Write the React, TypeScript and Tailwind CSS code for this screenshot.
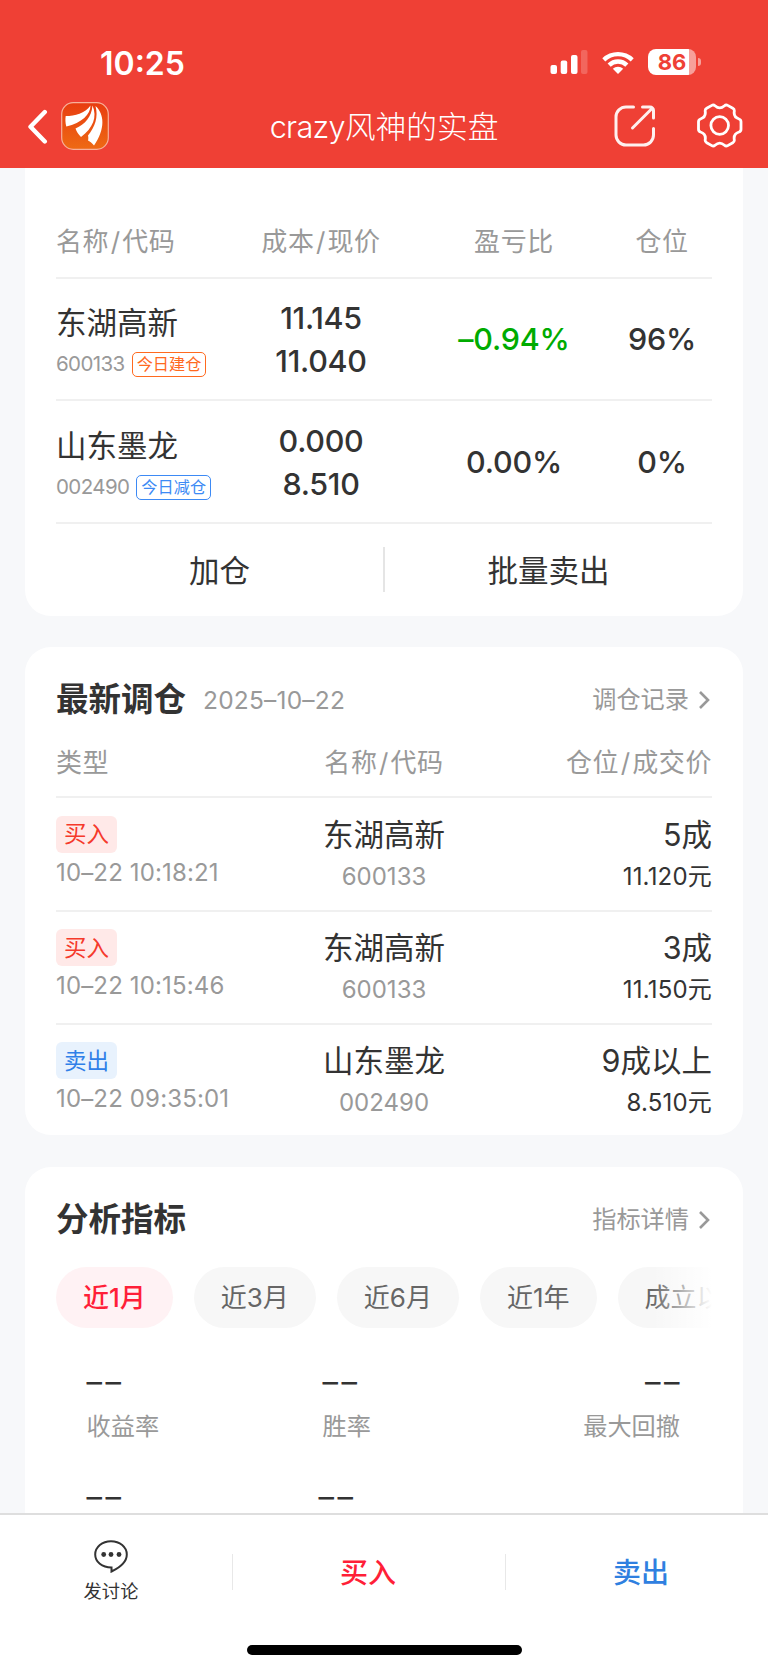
import React from "react";
import { clsx } from "clsx";

interface Holding {
  name: string;
  code: string;
  tag: string;
  tagTone: "open" | "reduce";
  cost: string;
  price: string;
  profit: string;
  position: string;
}

interface Trade {
  side: "buy" | "sell";
  time: string;
  name: string;
  code: string;
  amount: string;
  price: string;
}

const holdings: Holding[] = [
  { name: "东湖高新", code: "600133", tag: "今日建仓", tagTone: "open", cost: "11.145", price: "11.040", profit: "–0.94%", position: "96%" },
  { name: "山东墨龙", code: "002490", tag: "今日减仓", tagTone: "reduce", cost: "0.000", price: "8.510", profit: "0.00%", position: "0%" },
];

const trades: Trade[] = [
  { side: "buy", time: "10–22 10:18:21", name: "东湖高新", code: "600133", amount: "5成", price: "11.120元" },
  { side: "buy", time: "10–22 10:15:46", name: "东湖高新", code: "600133", amount: "3成", price: "11.150元" },
  { side: "sell", time: "10–22 09:35:01", name: "山东墨龙", code: "002490", amount: "9成以上", price: "8.510元" },
];

const periods = ["近1月", "近3月", "近6月", "近1年", "成立以来"];

const AppLogo = () => (
  <svg width="48" height="48" viewBox="0 0 48 48">
    <defs>
      <linearGradient id="logo" x1="0" y1="0" x2="0" y2="1">
        <stop offset="0" stopColor="#e83c10" />
        <stop offset="1" stopColor="#ee6a14" />
      </linearGradient>
    </defs>
    <rect x="0.7" y="0.7" width="46.6" height="46.6" rx="11.5" fill="url(#logo)" stroke="#f8b09a" strokeWidth="1.2" />
    <path d="M4.700 14 C14 14 24 11.500 29.500 3.500 C29.500 12 21 21 5.300 24.500 C4.300 21 4.200 17 4.700 14Z" fill="#fff" />
    <path d="M14.500 26.500 C24 22.500 30.500 15 31.500 3.500 C36.500 15 32 26 20 35 C17.500 32.500 15.500 29.500 14.500 26.500Z" fill="#fff" />
    <path d="M27 33.500 C34 25 37.500 15 34.500 4 C43.500 12 44.500 27 33 43.500 C31 41 28.500 39 27 38.500 C27.500 37 27.400 35 27 33.500Z" fill="#fff" />
  </svg>
);

const StatusBar = () => (
  <div className="flex h-[84px] items-start justify-between pt-[42px] pr-[67px] pl-[100px] text-white">
    <span className="pt-px text-[32px] leading-[41px] font-semibold">10:25</span>
    <div className="flex h-10 items-center">
      <svg width="38" height="24" viewBox="0 0 38 24" fill="#fff">
        <rect x="0.500" y="15" width="6.500" height="9" rx="2" />
        <rect x="10.700" y="10.500" width="6.500" height="13.500" rx="2" />
        <rect x="21" y="5" width="6.500" height="19" rx="2" />
        <rect x="31" y="0" width="6.500" height="24" rx="2" opacity="0.2" />
      </svg>
      <svg className="ml-[13px]" width="34" height="24" viewBox="0 0 34 24" fill="#fff">
        <path d="M1.300 8.300 A22.400 22.400 0 0 1 32.700 8.300 L29.700 11.400 A18 18 0 0 0 4.300 11.400Z" />
        <path d="M6.600 13.600 A14.800 14.800 0 0 1 27.400 13.600 L24.300 16.700 A10.400 10.400 0 0 0 9.700 16.700Z" />
        <path d="M11.800 18.800 A7.400 7.400 0 0 1 22.200 18.800 L17 24Z" />
      </svg>
      <div className="ml-[13px] flex h-[26px] w-[48px] items-center justify-center rounded-[8px] bg-gradient-to-r from-white from-[86%] to-white/50 to-[86%] text-[22px] leading-[26px] font-bold text-[#ef4035]">
        86
      </div>
      <div className="ml-[2px] h-2 w-[3px] rounded-r-full bg-white/50" />
    </div>
  </div>
);

const NavBar = () => (
  <div className="grid h-[84px] grid-cols-[200px_1fr_200px] items-center text-white">
    <div className="flex items-center pl-[26px]">
      <svg width="24" height="36" viewBox="0 0 24 36" fill="none" stroke="#fff" strokeWidth="4.400" strokeLinecap="round" strokeLinejoin="round">
        <path d="M18.800 4 L4.500 18.700 L18.800 33.500" />
      </svg>
      <div className="ml-[10.500px]">
        <AppLogo />
      </div>
    </div>
    <h1 className="pt-[3px] text-center text-[30.700px] font-light">
      <span className="tracking-[-0.700px]">crazy</span>风神的实盘
    </h1>
    <div className="flex items-center justify-end pr-[25px]">
      <svg width="42" height="42" viewBox="0 0 42 42" fill="none" stroke="#fff" strokeOpacity="0.92" strokeWidth="3" strokeLinecap="round" strokeLinejoin="round">
        <path d="M19.500 2 H12 A10 10 0 0 0 2 12 V30 A10 10 0 0 0 12 40 H29.500 A10 10 0 0 0 39.500 30 V23.500" />
        <path d="M28.500 2 H36 A3.500 3.500 0 0 1 39.500 5.500 V13 M38 3.500 L18.500 23" />
      </svg>
      <svg className="ml-[41px]" width="46" height="46" viewBox="0 0 46 46" fill="none" stroke="#fff" strokeWidth="2.800" strokeLinejoin="round">
        <path d="M14.800 2.400 Q16.500 1.300 18 2.800 Q22.700 7 27.500 2.800 Q29 1.300 30.700 2.400 L35.800 5.300 Q37.600 6.300 37.300 8.300 Q36.300 14.200 42 16 Q44 16.700 44 18.700 V26.300 Q44 28.300 42 29 Q36.300 30.800 37.300 36.700 Q37.600 38.700 35.800 39.700 L30.700 42.600 Q29 43.700 27.500 42.200 Q22.700 38 18 42.200 Q16.500 43.700 14.800 42.600 L9.700 39.700 Q7.900 38.700 8.200 36.700 Q9.200 30.800 3.500 29 Q1.500 28.300 1.500 26.300 V18.700 Q1.500 16.700 3.500 16 Q9.200 14.200 8.200 8.300 Q7.900 6.300 9.700 5.300Z" />
        <circle cx="22.700" cy="22.500" r="8.800" />
      </svg>
    </div>
  </div>
);

// Column heading such as 名称/代码, with some air around the slash
const ColumnTitle = ({ parts, className }: { parts: string[]; className?: string }) => (
  <span className={clsx("tracking-[0.600px]", className)}>
    {parts[0]}
    {parts[1] && (
      <>
        <span className="mx-[1.500px]">/</span>
        {parts[1]}
      </>
    )}
  </span>
);

const MoreLink = ({ label }: { label: string }) => (
  <a className="flex items-center text-[24.200px] text-[#999]">
    {label}
    <svg className="ml-[9px] mr-[2px]" width="12" height="20" viewBox="0 0 12 20" fill="none" stroke="#999" strokeWidth="2.600">
      <path d="M2 2 L10 10 L2 18" />
    </svg>
  </a>
);

const HoldingRow = ({ item }: { item: Holding }) => (
  <div className="grid h-[122.700px] grid-cols-[180px_170px_216px_80px] items-center border-b-2 border-[#f0f0f0] text-center text-[30.500px] text-[#333]">
    <div className="pt-[9px] text-left">
      <div className="leading-[42px]">{item.name}</div>
      <div className="flex h-[41px] items-center text-[20.500px] text-[#999]">
        <span className="tracking-[-0.600px]">{item.code}</span>
        <span
          className={clsx(
            "ml-[7px] flex h-[25px] items-center rounded-[5px] border-[1.500px] px-1 text-[16.200px] leading-none",
            item.tagTone === "open" ? "border-[#ff6a1f] text-[#ff6a1f]" : "border-[#3d8af5] text-[#3d8af5]"
          )}
        >
          {item.tag}
        </span>
      </div>
    </div>
    <div className="font-medium leading-[43px] tracking-[-0.300px]">
      <div>{item.cost}</div>
      <div>{item.price}</div>
    </div>
    <div className={clsx("pt-px font-medium tracking-[-0.200px]", item.profit.startsWith("–") && "text-[#00ab00]")}>{item.profit}</div>
    <div className="pt-px font-medium tracking-[-0.200px]">{item.position}</div>
  </div>
);

const TradeRow = ({ trade, first, last }: { trade: Trade; first: boolean; last: boolean }) => (
  <div className={clsx("grid grid-cols-3 text-[#333]", first ? "h-[114.500px] pt-px" : "h-[113px]", !last && "border-b-2 border-[#f0f0f0]")}>
    <div className="flex flex-col items-start pt-[17px]">
      <span
        className={clsx(
          "flex h-[37px] w-[61px] items-center justify-center rounded-[6px] text-[22.500px]",
          trade.side === "buy" ? "bg-[#ffe9e8] text-[#f5392b]" : "bg-[#e8f2fd] text-[#2f80e8]"
        )}
      >
        {trade.side === "buy" ? "买入" : "卖出"}
      </span>
      <span className="mt-[1px] text-[24px] leading-[38px] tracking-[0.150px] whitespace-nowrap text-[#999]">{trade.time}</span>
    </div>
    <div className="pt-[15px] text-center">
      <div className="text-[30.500px] leading-[42px]">{trade.name}</div>
      <div className="text-[24px] leading-[42px] text-[#999]">{trade.code}</div>
    </div>
    <div className="pt-[15px] text-right">
      <div className="text-[30.500px] leading-[42px]">{trade.amount}</div>
      <div className="text-[24px] leading-[42px] tracking-[0.200px]">{trade.price}</div>
    </div>
  </div>
);

const EmptyValue = ({ className }: { className?: string }) => (
  <div className={clsx("text-[31px] leading-[28px] font-normal tracking-[3.500px] text-[#333]", className)}>––</div>
);

export default function App() {
  return (
    <div className="flex h-[1670px] w-[768px] flex-col overflow-hidden bg-[#f7f8fa] font-['Inter','Noto_Sans_CJK_SC',sans-serif]">
      <header className="h-[168px] shrink-0 bg-[#ef4035]">
        <StatusBar />
        <NavBar />
      </header>

      <main className="flex min-h-0 flex-1 flex-col gap-[31px] overflow-hidden px-[25px]">
        <section className="h-[448px] shrink-0 rounded-b-[26px] bg-white px-[31px]">
          <div className="grid h-[110.500px] grid-cols-[180px_170px_216px_80px] border-b-2 border-[#f0f0f0] pt-[54px] text-center text-[26px] leading-[39px] text-[#999]">
            <ColumnTitle parts={["名称", "代码"]} className="text-left" />
            <ColumnTitle parts={["成本", "现价"]} />
            <ColumnTitle parts={["盈亏比"]} />
            <ColumnTitle parts={["仓位"]} />
          </div>
          {holdings.map(item => (
            <HoldingRow key={item.code} item={item} />
          ))}
          <div className="flex h-[92px] items-center text-center text-[30.500px] text-[#333]">
            <button className="flex-1 pt-[2px]">加仓</button>
            <div className="h-[45px] w-[2px] bg-[#e5e5e5]" />
            <button className="flex-1 pt-[2px]">批量卖出</button>
          </div>
        </section>

        <section className="h-[488px] shrink-0 rounded-[26px] bg-white px-[31px]">
          <div className="flex h-[90px] items-center pt-[16px]">
            <h2 className="text-[32.500px] font-bold text-[#333]">最新调仓</h2>
            <span className="ml-[17px] flex-1 text-[24.500px] tracking-[0.200px] text-[#999]">2025–10–22</span>
            <MoreLink label="调仓记录" />
          </div>
          <div className="grid h-[60.500px] grid-cols-3 border-b-2 border-[#f0f0f0] pt-[6px] text-[26px] leading-[39px] text-[#999]">
            <ColumnTitle parts={["类型"]} />
            <ColumnTitle parts={["名称", "代码"]} className="text-center" />
            <ColumnTitle parts={["仓位", "成交价"]} className="text-right" />
          </div>
          {trades.map((trade, i) => (
            <TradeRow key={trade.time} trade={trade} first={i === 0} last={i === trades.length - 1} />
          ))}
        </section>

        <section className="mt-px h-[400px] shrink-0 rounded-t-[26px] bg-white px-[31px]">
          <div className="flex h-[100px] items-center justify-between pt-[6px]">
            <h2 className="text-[32.500px] font-bold text-[#333]">分析指标</h2>
            <MoreLink label="指标详情" />
          </div>
          <div className="relative flex gap-[21px] overflow-hidden">
            {periods.map((period, i) => (
              <button
                key={period}
                className={clsx(
                  "h-[60.500px] shrink-0 rounded-full px-[27px] pt-px text-[26px]",
                  i === 0 ? "bg-[#fff2f4] font-medium text-[#ff1f38]" : "bg-[#f7f7f7] text-[#666]"
                )}
              >
                {period}
              </button>
            ))}
            <div className="absolute inset-y-0 right-0 w-[60px] bg-gradient-to-r from-white/0 to-white" />
          </div>
          <div className="flex pt-[40px] pr-[32px] pl-[30.500px] text-[24.200px] text-[#999]">
            <div className="w-[236px]">
              <EmptyValue />
              <div className="mt-[10px] leading-[42px]">收益率</div>
              <EmptyValue className="mt-[35px]" />
            </div>
            <div className="flex-1">
              <EmptyValue />
              <div className="mt-[10px] leading-[42px]">胜率</div>
              <EmptyValue className="mt-[35px] -ml-[4px]" />
            </div>
            <div className="text-right">
              <EmptyValue className="-mr-[3px]" />
              <div className="mt-[10px] leading-[42px]">最大回撤</div>
            </div>
          </div>
        </section>
      </main>

      <footer className="h-[157px] shrink-0 border-t-2 border-[#dedede] bg-white">
        <div className="flex h-[114px] items-center">
          <button className="flex w-[232px] flex-col items-center pr-[10px] text-[18.300px] text-[#333]">
            <svg width="34" height="33" viewBox="0 0 34 33" fill="none" stroke="#333" strokeWidth="2">
              <path d="M17.500 31.500 V27.500 C8 27.500 1.200 22 1.200 14.500 C1.200 7 8.200 1.200 17 1.200 C25.800 1.200 32.800 7 32.800 14.500 C32.800 21.500 27 27 17.500 31.500Z" />
              <g fill="#333" stroke="none">
                <circle cx="9.700" cy="14.500" r="2.400" />
                <circle cx="17" cy="14.500" r="2.400" />
                <circle cx="25" cy="14.500" r="2.400" />
              </g>
            </svg>
            <span className="mt-1 leading-[28px]">发讨论</span>
          </button>
          <div className="h-[36px] w-px bg-[#e8e8e8]" />
          <button className="flex-1 pt-[2px] pr-[2px] text-[28px] font-medium text-[#ff1f38]">买入</button>
          <div className="h-[36px] w-px bg-[#e8e8e8]" />
          <button className="w-[262px] pt-[2px] pl-[8px] text-[28px] font-medium text-[#2f80e0]">卖出</button>
        </div>
        <div className="mx-auto mt-[16px] h-[10px] w-[275px] rounded-full bg-black" />
      </footer>
    </div>
  );
}
